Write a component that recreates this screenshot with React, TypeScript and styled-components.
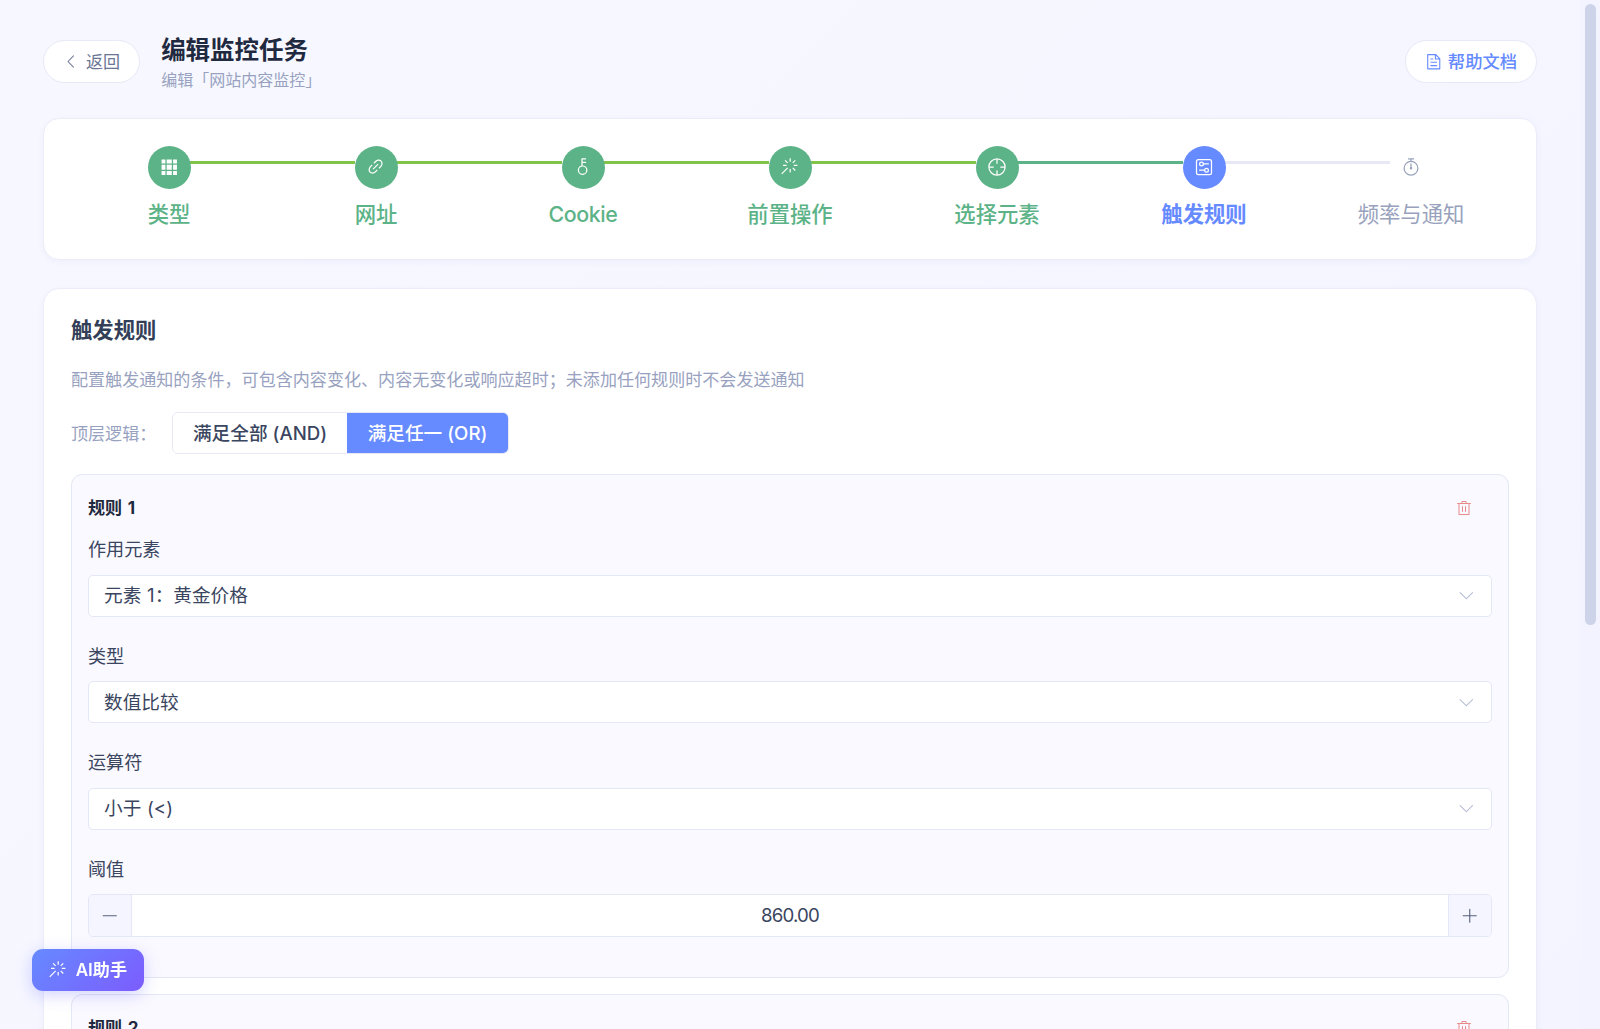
import React from "react";
import styled, { createGlobalStyle, css } from "styled-components";

const GlobalStyle = createGlobalStyle`
  * { box-sizing: border-box; }
  html, body { margin: 0; padding: 0; overflow: hidden; }
  body {
    font-family: Inter, "Noto Sans CJK SC", sans-serif;
    background: #f5f6ff;
    color: #3a4560;
  }
  button { font-family: inherit; margin: 0; }
`;

/* ---------- icons ---------- */

const iconPaths = {
  grid: ["M640 384v256H384V384h256zm64 0h192v256H704V384zm-64 512H384V704h256v192zm64 0V704h192v192H704zm-64-768v192H384V128h256zm64 0h192v192H704V128zM320 384v256H128V384h192zm0 512H128V704h192v192zm0-768v192H128V128h192z"],
  link: ["M715.648 625.152 670.4 579.904l90.496-90.56c75.008-74.944 85.12-186.368 22.656-248.896-62.528-62.464-173.952-52.352-248.96 22.656L444.16 353.6l-45.248-45.248 90.496-90.496c100.032-99.968 251.968-110.08 339.456-22.656 87.488 87.488 77.312 239.424-22.656 339.456l-90.496 90.496zm-90.496 90.496-90.496 90.496C434.624 906.112 282.688 916.224 195.2 828.8c-87.488-87.488-77.312-239.424 22.656-339.456l90.496-90.496 45.248 45.248-90.496 90.56c-75.008 74.944-85.12 186.368-22.656 248.896 62.528 62.464 173.952 52.352 248.96-22.656l90.496-90.496 45.248 45.248zm0-362.048 45.248 45.248L398.848 670.4 353.6 625.152 625.152 353.6z"],
  key: ["M448 456.064V96a32 32 0 0 1 32-32.064L672 64a32 32 0 0 1 0 64H512v128h160a32 32 0 0 1 0 64H512v128a256 256 0 1 1-64 8.064zM512 896a192 192 0 1 0 0-384 192 192 0 0 0 0 384z"],
  magic: ["M512 64h64v192h-64V64zm0 576h64v192h-64V640zM160 480v-64h192v64H160zm576 0v-64h192v64H736zM249.856 199.04l45.248-45.184L430.848 289.6 385.6 334.848 249.856 199.104zM657.152 606.4l45.248-45.248 135.744 135.744-45.248 45.248L657.152 606.4zM114.048 923.2 68.8 877.952l316.8-316.8 45.248 45.248-316.8 316.8zM702.4 334.848 657.152 289.6l135.744-135.744 45.248 45.248L702.4 334.848z"],
  aim: [
    "M512 896a384 384 0 1 0 0-768 384 384 0 0 0 0 768zm0 64a448 448 0 1 1 0-896 448 448 0 0 1 0 896z",
    "M512 96a32 32 0 0 1 32 32v192a32 32 0 0 1-64 0V128a32 32 0 0 1 32-32zm0 576a32 32 0 0 1 32 32v192a32 32 0 1 1-64 0V704a32 32 0 0 1 32-32zM96 512a32 32 0 0 1 32-32h192a32 32 0 0 1 0 64H128a32 32 0 0 1-32-32zm576 0a32 32 0 0 1 32-32h192a32 32 0 1 1 0 64H704a32 32 0 0 1-32-32z",
  ],
  setup: [
    "M224 160a64 64 0 0 0-64 64v576a64 64 0 0 0 64 64h576a64 64 0 0 0 64-64V224a64 64 0 0 0-64-64H224zm0-64h576a128 128 0 0 1 128 128v576a128 128 0 0 1-128 128H224A128 128 0 0 1 96 800V224A128 128 0 0 1 224 96z",
    "M384 416a64 64 0 1 0 0-128 64 64 0 0 0 0 128zm0 64a128 128 0 1 1 0-256 128 128 0 0 1 0 256z",
    "M480 320h256q32 0 32 32t-32 32H480q-32 0-32-32t32-32zm160 416a64 64 0 1 0 0-128 64 64 0 0 0 0 128zm0 64a128 128 0 1 1 0-256 128 128 0 0 1 0 256z",
    "M288 640h256q32 0 32 32t-32 32H288q-32 0-32-32t32-32z",
  ],
  timer: [
    "M512 896a320 320 0 1 0 0-640 320 320 0 0 0 0 640zm0 64a384 384 0 1 1 0-768 384 384 0 0 1 0 768z",
    "M512 320a32 32 0 0 1 32 32l-.512 224a32 32 0 1 1-64 0L480 352a32 32 0 0 1 32-32z",
    "M448 576a64 64 0 1 0 128 0 64 64 0 1 0-128 0zm96-448v128h-64V128h-96a32 32 0 0 1 0-64h256a32 32 0 1 1 0 64h-96z",
  ],
  document: ["M832 384H576V128H192v768h640V384zm-26.496-64L640 154.496V320h165.504zM160 64h480l256 256v608a32 32 0 0 1-32 32H160a32 32 0 0 1-32-32V96a32 32 0 0 1 32-32zm160 448h384v64H320v-64zm0-192h160v64H320v-64zm0 384h384v64H320v-64z"],
  arrowLeft: ["M609.408 149.376 277.76 489.6a32 32 0 0 0 0 44.672l331.648 340.352a29.12 29.12 0 0 0 41.728 0 30.592 30.592 0 0 0 0-42.752L339.264 511.936l311.872-319.872a30.592 30.592 0 0 0 0-42.688 29.12 29.12 0 0 0-41.728 0z"],
  arrowDown: ["M831.872 340.864 512 652.672 192.128 340.864a30.592 30.592 0 0 0-42.752 0 29.12 29.12 0 0 0 0 41.6L489.664 714.24a32 32 0 0 0 44.672 0l340.288-331.712a29.12 29.12 0 0 0 0-41.728 30.592 30.592 0 0 0-42.752 0z"],
  trash: ["M160 256H96a32 32 0 0 1 0-64h256V95.936a32 32 0 0 1 32-32h256a32 32 0 0 1 32 32V192h256a32 32 0 1 1 0 64h-64v672a32 32 0 0 1-32 32H192a32 32 0 0 1-32-32V256zm448-64v-64H416v64h192zM224 896h576V256H224v640zm192-128a32 32 0 0 1-32-32V416a32 32 0 0 1 64 0v320a32 32 0 0 1-32 32zm192 0a32 32 0 0 1-32-32V416a32 32 0 0 1 64 0v320a32 32 0 0 1-32 32z"],
  minus: ["M128 544h768a32 32 0 1 0 0-64H128a32 32 0 0 0 0 64z"],
  plus: ["M480 480V128a32 32 0 0 1 64 0v352h352a32 32 0 1 1 0 64H544v352a32 32 0 1 1-64 0V544H128a32 32 0 0 1 0-64h352z"],
};

type IconName = keyof typeof iconPaths;

const Svg = styled.svg`
  display: block;
  flex: none;
  fill: currentColor;
`;

const Icon = ({ name, size }: { name: IconName; size: number }) => (
  <Svg viewBox="0 0 1024 1024" width={size} height={size} aria-hidden="true">
    {iconPaths[name].map((d) => (
      <path key={d} d={d} />
    ))}
  </Svg>
);

/* ---------- page frame ---------- */

const Page = styled.div`
  display: flex;
  width: 1600px;
  height: 1029px;
  overflow: hidden;
  background: linear-gradient(135deg, #f7f8ff 0%, #f3f4ff 100%);
`;

const Main = styled.main`
  flex: 1;
  min-width: 0;
  height: 1029px;
  overflow: hidden;
  padding: 32px 43px 0;
`;

const ScrollTrack = styled.div`
  flex: none;
  width: 20px;
  padding: 4px 4px 0 5px;
  background: rgba(240, 242, 255, 0.35);
`;

const ScrollThumb = styled.div`
  height: 621px;
  border-radius: 6px;
  background: #cdd3e8;
`;

/* ---------- header ---------- */

const Header = styled.header`
  display: flex;
  align-items: center;
  height: 59px;
  margin-bottom: 27px;
`;

const PillButton = styled.button<{ $tone: "plain" | "primary" }>`
  display: flex;
  align-items: center;
  height: 43px;
  padding: 0 19px;
  gap: ${(p) => (p.$tone === "primary" ? 5 : 6)}px;
  border: 1px solid #e6e8f6;
  border-radius: 22px;
  background: #fff;
  font-size: ${(p) => (p.$tone === "primary" ? 17.3 : 17.07)}px;
  line-height: 24px;
  font-weight: ${(p) => (p.$tone === "primary" ? 500 : 400)};
  color: ${(p) => (p.$tone === "primary" ? "#668aff" : "#6b7695")};
`;

const Titles = styled.div`
  flex: 1;
  margin-left: 21px;
  padding-top: 2px;
`;

const PageTitle = styled.h1`
  margin: 0;
  font-size: 24.5px;
  line-height: 36px;
  font-weight: 700;
  color: #1f2940;
`;

const PageSubtitle = styled.div`
  font-size: 16px;
  line-height: 25px;
  color: #98a2c0;
`;

/* ---------- cards ---------- */

const Card = styled.section`
  background: #fff;
  border: 1px solid #ebecf8;
  border-radius: 16px;
  box-shadow: 0 2px 6px rgba(90, 100, 180, 0.06);
`;

const StepsCard = styled(Card)`
  display: flex;
  height: 142px;
  padding: 26.5px 21.5px 0;
  margin-bottom: 28px;
`;

/* ---------- steps ---------- */

type StepStatus = "done" | "active" | "wait";

const stepColor = { done: "#5cb387", active: "#668aff", wait: "#98a2bc" };

const StepItem = styled.div<{ $status: StepStatus }>`
  position: relative;
  flex: 1;
  display: flex;
  flex-direction: column;
  align-items: center;
  color: ${(p) => stepColor[p.$status]};
`;

const StepLine = styled.div<{ $color: string }>`
  position: absolute;
  top: 15.5px;
  left: 50%;
  width: calc(100% - 21px);
  height: 3px;
  background: ${(p) => p.$color};
`;

const StepIcon = styled.div<{ $status: StepStatus }>`
  position: relative;
  display: flex;
  align-items: center;
  justify-content: center;
  width: 43px;
  height: 43px;
  border-radius: 50%;
  ${(p) =>
    p.$status === "wait"
      ? css`background: #fff;`
      : css`background: ${stepColor[p.$status]}; color: #fff;`}
`;

const StepLabel = styled.div<{ $status: StepStatus }>`
  margin-top: 9.5px;
  font-size: 21.33px;
  line-height: 32px;
  white-space: nowrap;
  font-weight: ${(p) => ({ done: 500, active: 700, wait: 400 })[p.$status]};
`;

const LatinLabel = styled.span`
  letter-spacing: -0.4px;
`;

/* ---------- rules panel ---------- */

const RulesCard = styled(Card)`
  padding: 25px 27px;
  height: 1200px;
`;

const SectionTitle = styled.h2`
  margin: 0 0 20px;
  font-size: 21.33px;
  line-height: 32px;
  font-weight: 700;
  color: #333f58;
`;

const Hint = styled.p`
  margin: 0 0 18px;
  font-size: 17.07px;
  line-height: 28px;
  color: #98a2c0;
`;

const LogicRow = styled.div`
  display: flex;
  align-items: center;
  height: 43px;
  margin-bottom: 19px;
`;

const LogicLabel = styled.span`
  width: 101px;
  font-size: 17.07px;
  line-height: 24px;
  color: #98a2c0;
`;

const Segmented = styled.div`
  align-self: flex-start;
  display: flex;
  height: 42px;
  border: 1px solid #e6e8f6;
  border-radius: 6px;
  overflow: hidden;
`;

const Segment = styled.button<{ $selected: boolean; $width: number }>`
  width: ${(p) => p.$width}px;
  padding: 1px 0 0;
  border: 0;
  background: ${(p) => (p.$selected ? "#668aff" : "#fff")};
  color: ${(p) => (p.$selected ? "#fff" : "#3a4560")};
  font-size: 18.67px;
  line-height: 39px;
  font-weight: 500;
  white-space: nowrap;
`;

const RuleCard = styled.div`
  height: 504px;
  margin-bottom: 16px;
  padding: 16px 16px 0;
  border: 1px solid #e4e7f5;
  border-radius: 11px;
  background: #faf9ff;
`;

const RuleHead = styled.div`
  display: flex;
  align-items: center;
  justify-content: space-between;
  height: 34px;
  padding-right: 20px;
`;

const RuleName = styled.span`
  font-size: 17.07px;
  line-height: 26px;
  font-weight: 700;
  word-spacing: 1.5px;
  color: #1f2940;
`;

const DeleteButton = styled.button`
  display: flex;
  padding: 0;
  border: 0;
  background: none;
  color: #e68c8c;
`;

const Field = styled.div`
  display: flex;
  flex-direction: column;
  height: 106.5px;
`;

const FieldLabel = styled.label`
  height: 49.5px;
  padding-top: 10px;
  font-size: 18.13px;
  line-height: 28px;
  color: #3a4560;
`;

const Control = styled.div`
  display: flex;
  align-items: center;
  height: 42.5px;
  border: 1px solid #e4e7f5;
  border-radius: 5px;
  background: #fff;
  overflow: hidden;
  font-size: 18.67px;
  line-height: 26px;
  color: #3a4560;
`;

const SelectBox = styled(Control)`
  justify-content: space-between;
  height: 42px;
  padding: 0 15px;
  svg { color: #b6bed4; }
`;

const SelectValue = styled.span`
  padding-top: 1.5px;
  word-spacing: 0.5px;
`;

const NumberValue = styled.span`
  flex: 1;
  padding-top: 1px;
  text-align: center;
  letter-spacing: -0.8px;
`;

const StepperButton = styled.button<{ $side: "left" | "right" }>`
  display: flex;
  align-items: center;
  justify-content: center;
  width: 43px;
  height: 100%;
  padding: 0;
  border: 0;
  border-${(p) => (p.$side === "left" ? "right" : "left")}: 1px solid #e4e7f5;
  background: #f4f5ff;
  color: #56607a;
`;

/* ---------- floating assistant ---------- */

const AssistantButton = styled.button`
  position: fixed;
  left: 32px;
  top: 948.7px;
  display: flex;
  align-items: center;
  gap: 8.5px;
  width: 111.5px;
  height: 42.7px;
  padding: 0 0 0 16px;
  border: 0;
  border-radius: 11px;
  background: linear-gradient(135deg, #668aff 0%, #7c5cff 100%);
  box-shadow: 0 4px 16px rgba(110, 110, 255, 0.3);
  color: #fff;
  font-size: 17.07px;
  line-height: 24px;
  font-weight: 600;
  white-space: nowrap;
`;

/* ---------- data ---------- */

const steps: { label: string; icon: IconName; size: number; status: StepStatus; line?: string }[] = [
  { label: "类型", icon: "grid", size: 20.5, status: "done", line: "#80c44c" },
  { label: "网址", icon: "link", size: 19.2, status: "done", line: "#80c44c" },
  { label: "Cookie", icon: "key", size: 19.2, status: "done", line: "#80c44c" },
  { label: "前置操作", icon: "magic", size: 19.2, status: "done", line: "#80c44c" },
  { label: "选择元素", icon: "aim", size: 20, status: "done", line: "#5cb387" },
  { label: "触发规则", icon: "setup", size: 20, status: "active", line: "#e6e8f5" },
  { label: "频率与通知", icon: "timer", size: 20, status: "wait" },
];

const selects = [
  { label: "作用元素", value: "元素 1：黄金价格" },
  { label: "类型", value: "数值比较" },
  { label: "运算符", value: "小于 (<)" },
];

const Rule = ({ index }: { index: number }) => (
  <RuleCard>
    <RuleHead>
      <RuleName>规则 {index}</RuleName>
      <DeleteButton aria-label="删除">
        <Icon name="trash" size={16} />
      </DeleteButton>
    </RuleHead>
    {selects.map((s) => (
      <Field key={s.label}>
        <FieldLabel>{s.label}</FieldLabel>
        <SelectBox>
          <SelectValue>{s.value}</SelectValue>
          <Icon name="arrowDown" size={18.67} />
        </SelectBox>
      </Field>
    ))}
    <Field>
      <FieldLabel>阈值</FieldLabel>
      <Control>
        <StepperButton $side="left" aria-label="减少">
          <Icon name="minus" size={17.5} />
        </StepperButton>
        <NumberValue>860.00</NumberValue>
        <StepperButton $side="right" aria-label="增加">
          <Icon name="plus" size={17.5} />
        </StepperButton>
      </Control>
    </Field>
  </RuleCard>
);

export default function App() {
  return (
    <>
      <GlobalStyle />
      <Page>
        <Main>
          <Header>
            <PillButton $tone="plain">
              <Icon name="arrowLeft" size={17} />
              返回
            </PillButton>
            <Titles>
              <PageTitle>编辑监控任务</PageTitle>
              <PageSubtitle>编辑「网站内容监控」</PageSubtitle>
            </Titles>
            <PillButton $tone="primary">
              <Icon name="document" size={17.5} />
              帮助文档
            </PillButton>
          </Header>

          <StepsCard>
            {steps.map((s) => (
              <StepItem key={s.label} $status={s.status}>
                {s.line && <StepLine $color={s.line} />}
                <StepIcon $status={s.status}>
                  <Icon name={s.icon} size={s.size} />
                </StepIcon>
                <StepLabel $status={s.status}>
                  {s.label === "Cookie" ? <LatinLabel>{s.label}</LatinLabel> : s.label}
                </StepLabel>
              </StepItem>
            ))}
          </StepsCard>

          <RulesCard>
            <SectionTitle>触发规则</SectionTitle>
            <Hint>配置触发通知的条件，可包含内容变化、内容无变化或响应超时；未添加任何规则时不会发送通知</Hint>
            <LogicRow>
              <LogicLabel>顶层逻辑：</LogicLabel>
              <Segmented>
                <Segment $selected={false} $width={174}>满足全部 (AND)</Segment>
                <Segment $selected $width={161}>满足任一 (OR)</Segment>
              </Segmented>
            </LogicRow>
            <Rule index={1} />
            <Rule index={2} />
          </RulesCard>
        </Main>
        <ScrollTrack>
          <ScrollThumb />
        </ScrollTrack>
      </Page>
      <AssistantButton>
        <Icon name="magic" size={19.2} />
        AI助手
      </AssistantButton>
    </>
  );
}
